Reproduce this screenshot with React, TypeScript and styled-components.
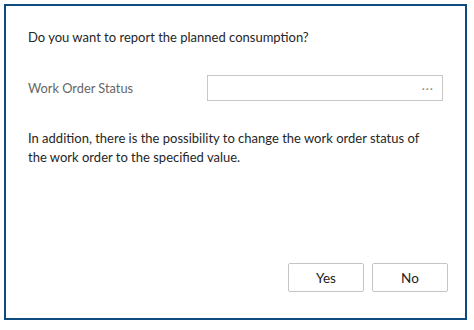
import React from "react";
import styled, { createGlobalStyle } from "styled-components";

const Global = createGlobalStyle`
  html, body { margin: 0; padding: 0; background: #ffffff; }
  body { font-family: "Lato", "Open Sans", sans-serif; }
`;

const Page = styled.div`
  width: 474px;
  height: 330px;
  padding: 4px;
  box-sizing: border-box;
`;

const Dialog = styled.div`
  width: 463px;
  height: 316px;
  box-sizing: border-box;
  border: 2px solid #0d4a7e;
  background: #ffffff;
  display: flex;
  flex-direction: column;
  padding: 22px 17px 26px 22px;
`;

const Question = styled.p`
  margin: 0;
  font-size: 13px;
  line-height: 18px;
  color: #262626;
`;

const FieldRow = styled.div`
  display: flex;
  align-items: center;
  margin-top: 29px;
`;

const Label = styled.span`
  width: 179px;
  font-size: 12.8px;
  color: #666666;
`;

const Input = styled.div`
  width: 236px;
  height: 26px;
  box-sizing: border-box;
  border: 1px solid #c8c8c8;
  display: flex;
  align-items: center;
  justify-content: flex-end;
  padding-right: 8px;
  color: #8a8a8a;
  font-size: 12px;
  letter-spacing: 1px;
`;

const Info = styled.p`
  margin: 28px 0 0 0;
  font-size: 13px;
  line-height: 19px;
  color: #262626;
  width: 398px;
`;

const Footer = styled.div`
  margin-top: auto;
  display: flex;
  justify-content: flex-end;
  gap: 8px;
`;

const Button = styled.button`
  width: 76px;
  height: 29px;
  box-sizing: border-box;
  border: 1px solid #c4c4c4;
  border-radius: 2px;
  background: #ffffff;
  font-family: "Lato", "Open Sans", sans-serif;
  font-size: 13.5px;
  color: #212121;
  padding: 0;
`;

export default function App() {
  return (
    <Page>
      <Global />
      <Dialog>
        <Question>Do you want to report the planned consumption?</Question>
        <FieldRow>
          <Label>Work Order Status</Label>
          <Input>···</Input>
        </FieldRow>
        <Info>
          In addition, there is the possibility to change the work order status of the work order to the specified value.
        </Info>
        <Footer>
          <Button>Yes</Button>
          <Button>No</Button>
        </Footer>
      </Dialog>
    </Page>
  );
}
